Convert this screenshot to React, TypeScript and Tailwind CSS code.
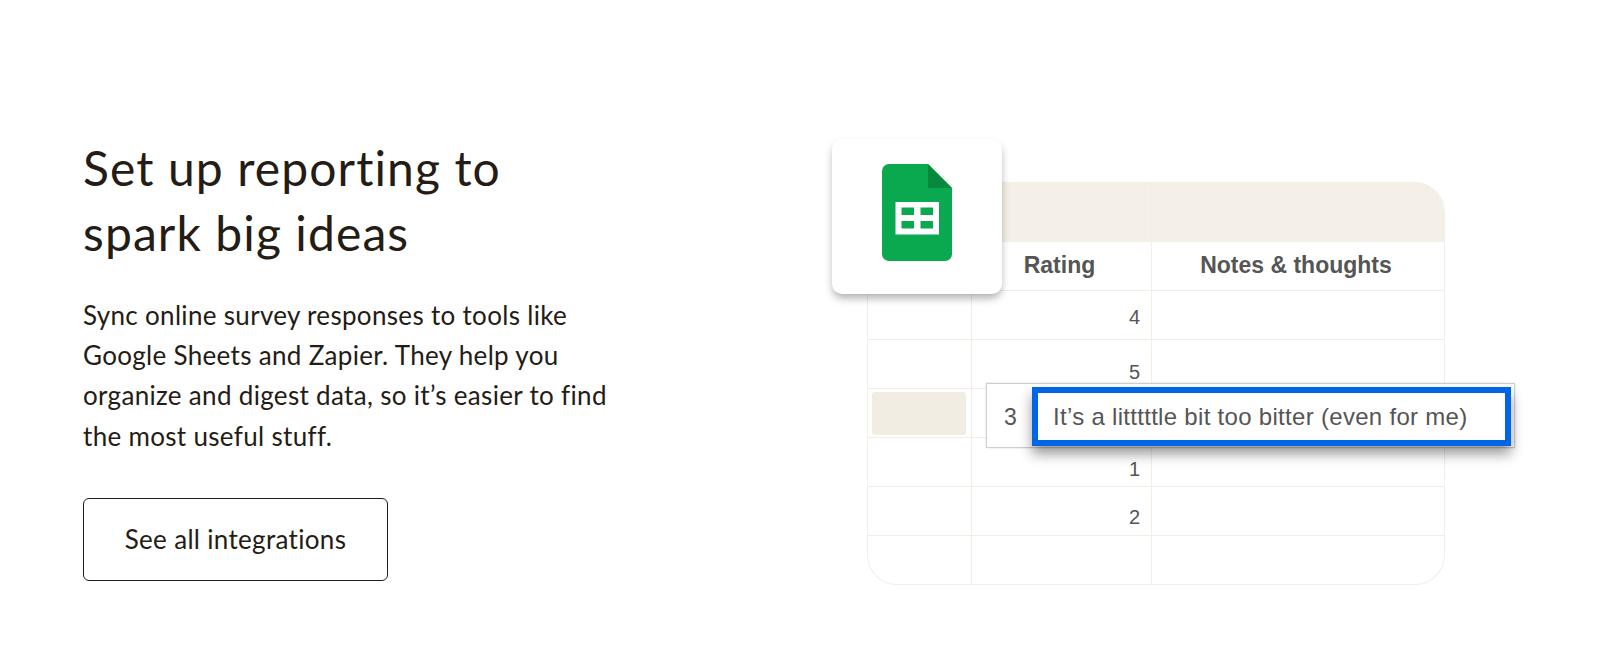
const rows = [
  { value: "4", offset: "pt-[4px]" },
  { value: "5", offset: "pt-[16px]" },
  { value: "", offset: "" },
  { value: "1", offset: "pt-[14px]" },
  { value: "2", offset: "pt-[12px]" },
  { value: "", offset: "" },
];
const line = "border-[#f2eee5]";

function SheetsIcon() {
  return (
    <svg width="70" height="97" viewBox="0 0 70 97" aria-hidden="true">
      <path d="M7 0H46L70 24V90a7 7 0 0 1-7 7H7a7 7 0 0 1-7-7V7a7 7 0 0 1 7-7Z" fill="#0aa84f" />
      <path d="M46 0L70 24H46Z" fill="#078a3e" />
      <path d="M13.5 38H57V70.5H13.5ZM19.5 43.5V51H32V43.5ZM38.5 43.5V51H51V43.5ZM19.5 57V64.5H32V57ZM38.5 57V64.5H51V57Z" fill="#fff" fillRule="evenodd" />
    </svg>
  );
}

export default function App() {
  return (
    <div className="flex h-[658px] w-full items-start overflow-hidden bg-white font-['Lato','Liberation_Sans',sans-serif] text-[#241c15]">
      <section className="w-[867px] shrink-0 pl-[83px] pt-[135px]">
        <h1 className="text-[48px] leading-[65px] font-normal tracking-[1.1px]">
          Set up reporting to
          <br />
          spark big ideas
        </h1>
        <p className="mt-[30px] text-[26px] leading-[40.2px] tracking-[0.32px]">
          Sync online survey responses to tools like
          <br />
          Google Sheets and Zapier. They help you
          <br />
          organize and digest data, so it’s easier to find
          <br />
          the most useful stuff.
        </p>
        <button className="mt-[42px] flex h-[83px] w-[305px] items-center justify-center rounded-[6px] border border-[#241c15] text-[26px] tracking-[0.32px]">
          See all integrations
        </button>
      </section>

      <section className="relative mt-[182px] w-[578px] shrink-0 font-['Liberation_Sans',Arial,sans-serif] text-[#555]">
        <div className={`grid grid-cols-[103px_180px_1fr] overflow-hidden rounded-[30px] border-x border-b ${line}`}>
          <div className="h-[60px] bg-[#f4f0e8]" />
          <div className="h-[60px] bg-[#f4f0e8]" />
          <div className={`h-[60px] border-l ${line} bg-[#f4f0e8]`} />
          <div className={`h-[49px] border-b ${line}`} />
          <div className={`flex h-[49px] items-center justify-center border-b border-l pb-[1px] pr-[4px] ${line} text-[23px] font-bold`}>Rating</div>
          <div className={`flex h-[49px] items-center justify-center border-b border-l pb-[1px] pr-[4px] ${line} text-[23px] font-bold`}>Notes &amp; thoughts</div>
          {rows.map((row, i) => (
            <div key={i} className="contents">
              <div className={`flex items-center pl-[4px] ${i < 5 ? "h-[49px] border-b" : "h-[48px]"} ${line}`}>
                {i === 2 && <div className="h-[43px] w-[94px] rounded-[3px] bg-[#f1ede3]" />}
              </div>
              <div className={`flex items-center justify-end border-l pr-[11px] text-[20px] ${row.offset} ${i < 5 ? "h-[49px] border-b" : "h-[48px]"} ${line}`}>{row.value}</div>
              <div className={`border-l ${i < 5 ? "h-[49px] border-b" : "h-[48px]"} ${line}`} />
            </div>
          ))}
        </div>

        <div className="absolute left-[-35px] top-[-43px] flex h-[155px] w-[170px] items-center justify-center rounded-[10px] bg-white pb-[8px] shadow-[0_5px_8px_-1px_rgba(0,0,0,0.32)]">
          <SheetsIcon />
        </div>

        <div className="absolute left-[119px] top-[201px] flex h-[65px] w-[529px] items-start border border-[#cfcfcf] bg-white pr-[3px] pt-[3px] shadow-[0_0_2px_rgba(0,0,0,0.15)]">
          <span className="w-[45px] pl-[17px] pt-[13px] text-[23px]">3</span>
          <div className="flex h-[59px] flex-1 items-center whitespace-nowrap border-[6px] border-[#0066e6] pl-[15px] text-[24px] tracking-[0.3px] shadow-[0_8px_12px_rgba(0,0,0,0.4)]">
            It’s a litttttle bit too bitter (even for me)
          </div>
        </div>
      </section>
    </div>
  );
}
